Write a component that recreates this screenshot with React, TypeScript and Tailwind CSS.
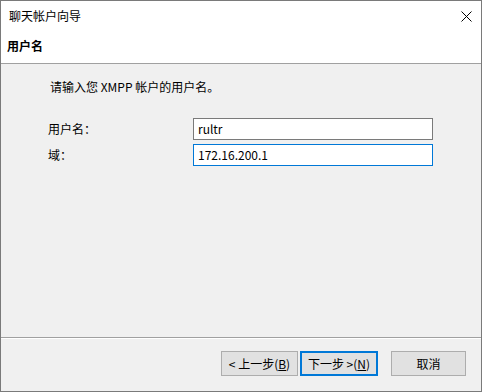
export default function App() {
  return (
    <div className="w-[482px] h-[392px] border border-[#7a7a7a] bg-white flex flex-col font-['Noto_Sans_CJK_SC','Noto_Sans',sans-serif] text-[12px] leading-[16px] text-black">
      {/* title bar */}
      <div className="h-[30px] shrink-0 flex items-center justify-between pl-[8px] pr-[9px]">
        <span>聊天帐户向导</span>
        <svg width="11" height="11" viewBox="0 0 11 11" className="mt-[1px]">
          <path d="M0.5 0.5 L10.5 10.5 M10.5 0.5 L0.5 10.5" stroke="#000" strokeWidth="1" />
        </svg>
      </div>

      {/* page header */}
      <div className="h-[33px] shrink-0 border-b border-[#a0a0a0] pl-[6px] pt-[7px] font-bold">用户名</div>

      {/* page body */}
      <div className="h-[274px] shrink-0 bg-[#f0f0f0] border-b border-[#a0a0a0] pt-[15px]">
        <p className="pl-[49px]">请输入您 XMPP 帐户的用户名。</p>
        <div className="mt-[23px] ml-[47px] grid grid-cols-[145px_240px] gap-y-[4px] items-center">
          <label>用户名：</label>
          <div className="h-[22px] bg-white border border-[#7a7a7a] pl-[4px] flex items-center">rultr</div>
          <label>域：</label>
          <div className="h-[22px] bg-white border border-[#0078d7] pl-[4px] flex items-center">172.16.200.1</div>
        </div>
      </div>

      {/* buttons */}
      <div className="flex-1 bg-[#f0f0f0] border-t border-white flex justify-end items-start pt-[12px] pr-[15px]">
        <button className="w-[77px] h-[25px] bg-[#e1e1e1] border border-[#adadad]">
          &lt; 上一步(<span className="underline">B</span>)
        </button>
        <button className="ml-[2px] w-[78px] h-[25px] bg-[#e1e1e1] border-2 border-[#0078d7]">
          下一步 &gt;(<span className="underline">N</span>)
        </button>
        <button className="ml-[13px] w-[75px] h-[25px] bg-[#e1e1e1] border border-[#adadad]">取消</button>
      </div>
    </div>
  );
}
